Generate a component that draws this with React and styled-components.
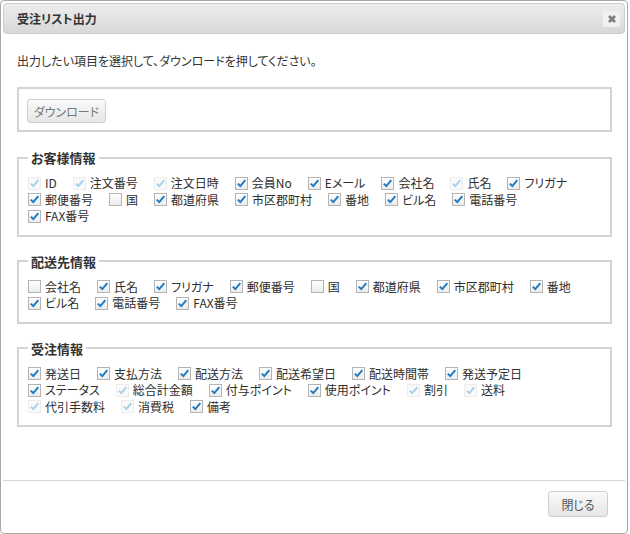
import React from 'react';
import styled, { createGlobalStyle } from 'styled-components';

const GlobalStyle = createGlobalStyle`
  html, body {
    margin: 0;
    padding: 0;
    background: #ffffff;
  }
  body {
    font-family: "Noto Sans CJK JP", "Liberation Sans", sans-serif;
    font-size: 12px;
    color: #333;
    font-feature-settings: "palt";
  }
  * {
    box-sizing: border-box;
  }
`;

const Dialog = styled.div`
  width: 628px;
  height: 534px;
  border: 1px solid #a8a8a8;
  border-radius: 4px;
  padding: 2px;
  background: #fff;
  display: flex;
  flex-direction: column;
`;

const TitleBar = styled.div`
  height: 31px;
  padding: 0 4px 0 13px;
  display: flex;
  align-items: center;
  justify-content: space-between;
  border: 1px solid #cdcdcd;
  border-radius: 4px;
  background: linear-gradient(#ededed, #d8d8d8);
`;

const Title = styled.span`
  font-size: 12px;
  font-weight: 700;
  color: #333;
`;

const CloseIcon = styled.span`
  width: 17px;
  height: 16px;
  display: flex;
  align-items: center;
  justify-content: center;
  border-radius: 2px;
  background: #f1f1f1;
`;

const Body = styled.div`
  flex: 1;
  padding: 0 13px 0 14px;
`;

const Lead = styled.p`
  margin: 19px 0 18px;
  line-height: 16px;
  color: #333;
`;

const DownloadBox = styled.div`
  border: 2px solid #d4d4d4;
  padding: 10px 8px 7px;
  margin-bottom: 17px;
`;

const Button = styled.button`
  font-family: inherit;
  font-feature-settings: "palt";
  font-size: 12px;
  color: ${props => props.$dark ? '#555' : '#777'};
  width: ${props => props.$width}px;
  height: ${props => props.$height}px;
  padding: 0;
  border: 1px solid #cfcfcf;
  border-radius: 3px;
  background: linear-gradient(#fafafa, #e6e6e6);
  cursor: pointer;
`;

const Group = styled.fieldset`
  margin: 0 0 16px;
  padding: 9px 9px 10px;
  border: 2px solid #d4d4d4;
`;

const Legend = styled.legend`
  padding: 0 3px;
  margin-left: 0;
  font-size: 13px;
  line-height: 17px;
  font-weight: 700;
  color: #333;
`;

const Row = styled.div`
  display: flex;
  height: 16.5px;
  align-items: center;
`;

const Item = styled.label`
  display: inline-flex;
  align-items: center;
  margin-right: 16px;
  white-space: nowrap;
  line-height: 16px;
  color: #2e2e2e;
`;

const Box = styled.span`
  width: 13px;
  height: 13px;
  margin-right: 4px;
  display: inline-flex;
  align-items: center;
  justify-content: center;
  border: 1px solid ${props => props.$state === 'd' ? '#ececec' : '#b4b4b4'};
  background: ${props => props.$state === 'd' ? '#fafafa' : 'linear-gradient(#ffffff, #ececec)'};
`;

const Footer = styled.div`
  border-top: 1px solid #d6d6d6;
  padding: 10px 17px 14px 0;
  display: flex;
  justify-content: flex-end;
`;

const groups = [
  {
    title: 'お客様情報',
    rows: [
      [['ID', 'd'], ['注文番号', 'd'], ['注文日時', 'd'], ['会員No', 'c'], ['Eメール', 'c'], ['会社名', 'c'], ['氏名', 'd'], ['フリガナ', 'c']],
      [['郵便番号', 'c'], ['国', 'u'], ['都道府県', 'c'], ['市区郡町村', 'c'], ['番地', 'c'], ['ビル名', 'c'], ['電話番号', 'c']],
      [['FAX番号', 'c']],
    ],
  },
  {
    title: '配送先情報',
    rows: [
      [['会社名', 'u'], ['氏名', 'c'], ['フリガナ', 'c'], ['郵便番号', 'c'], ['国', 'u'], ['都道府県', 'c'], ['市区郡町村', 'c'], ['番地', 'c']],
      [['ビル名', 'c'], ['電話番号', 'c'], ['FAX番号', 'c']],
    ],
  },
  {
    title: '受注情報',
    rows: [
      [['発送日', 'c'], ['支払方法', 'c'], ['配送方法', 'c'], ['配送希望日', 'c'], ['配送時間帯', 'c'], ['発送予定日', 'c']],
      [['ステータス', 'c'], ['総合計金額', 'd'], ['付与ポイント', 'c'], ['使用ポイント', 'c'], ['割引', 'd'], ['送料', 'd']],
      [['代引手数料', 'd'], ['消費税', 'd'], ['備考', 'c']],
    ],
  },
];

// state: c = checked, d = checked + disabled, u = unchecked
const Check = ({ state }) => (
  <Box $state={state}>
    {state !== 'u' && (
      <svg width="11" height="11" viewBox="0 0 11 11">
        <path
          d="M1.8 5.6 L4.3 8.1 L9.3 2.2"
          fill="none"
          stroke={state === 'd' ? '#a9d0ea' : '#1d7cc4'}
          strokeWidth="2"
        />
      </svg>
    )}
  </Box>
);

const App = () => {
  return (
    <>
      <GlobalStyle />
      <Dialog>
        <TitleBar>
          <Title>受注リスト出力</Title>
          <CloseIcon>
            <svg width="10" height="10" viewBox="0 0 10 10">
              <path d="M2 2 L8 8 M8 2 L2 8" stroke="#7d7d7d" strokeWidth="2.6" />
            </svg>
          </CloseIcon>
        </TitleBar>

        <Body>
          <Lead>出力したい項目を選択して、ダウンロードを押してください。</Lead>
          <DownloadBox>
            <Button $width={79} $height={24}>ダウンロード</Button>
          </DownloadBox>

          {groups.map(group => (
            <Group key={group.title}>
              <Legend>{group.title}</Legend>
              {group.rows.map((row, i) => (
                <Row key={i}>
                  {row.map(([label, state]) => (
                    <Item key={label}>
                      <Check state={state} />
                      {label}
                    </Item>
                  ))}
                </Row>
              ))}
            </Group>
          ))}
        </Body>

        <Footer>
          <Button $dark $width={60} $height={26}>閉じる</Button>
        </Footer>
      </Dialog>
    </>
  );
};

export default App;
